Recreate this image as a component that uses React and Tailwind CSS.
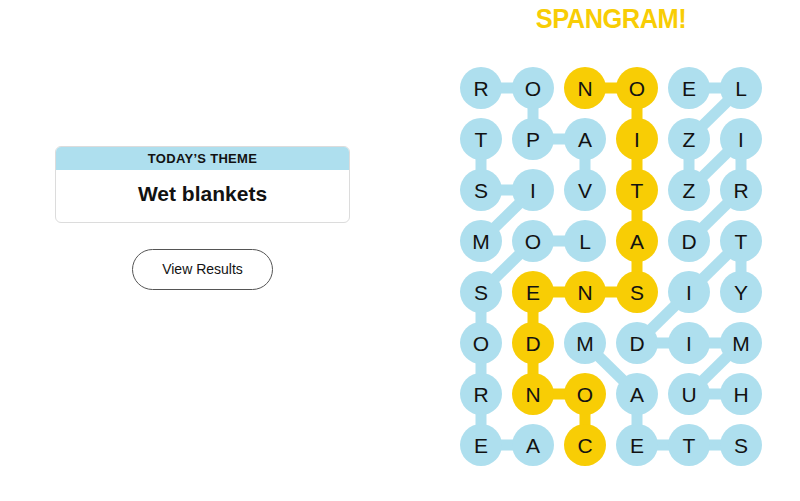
import React from "react";

const GRID = [
  "RONOEL",
  "TPAIZI",
  "SIVTZR",
  "MOLADT",
  "SENSIY",
  "ODMDIM",
  "RNOAUH",
  "EACETS",
];

const WORDS = [
  { spangram: false, cells: [[0, 0], [0, 1], [1, 1], [1, 2], [2, 2]] },
  { spangram: false, cells: [[1, 0], [2, 0], [2, 1], [3, 0]] },
  { spangram: false, cells: [[3, 2], [3, 1], [4, 0], [5, 0], [6, 0], [7, 0], [7, 1]] },
  { spangram: false, cells: [[3, 4], [2, 5], [1, 5], [2, 4], [1, 4], [0, 5], [0, 4]] },
  { spangram: false, cells: [[6, 5], [6, 4], [5, 5], [5, 4], [5, 3], [4, 4], [3, 5], [4, 5]] },
  { spangram: false, cells: [[7, 5], [7, 4], [7, 3], [6, 3], [5, 2]] },
  {
    spangram: true,
    cells: [[7, 2], [6, 2], [6, 1], [5, 1], [4, 1], [4, 2], [4, 3], [3, 3], [2, 3], [1, 3], [0, 3], [0, 2]],
  },
];

const isSpan = (r, c) =>
  WORDS[6].cells.some(([rr, cc]) => rr === r && cc === c);

const cx = (c) => 21 + 52 * c;
const cy = (r) => 21 + 51 * r;

export default function App() {
  return (
    <div className="w-[800px] h-[501px] bg-white flex" style={{ fontFamily: '"Liberation Sans", Arial, sans-serif' }}>
      <div className="w-[405px] flex flex-col items-center pt-[146px]">
        <div className="w-[295px] rounded-md border border-[#dcdcdc] overflow-hidden">
          <div className="h-[23px] bg-[#aedfee] flex items-center justify-center text-[13px] font-bold text-[#121212] leading-none tracking-[0.3px]">
            TODAY’S THEME
          </div>
          <div className="h-[52px] flex items-center justify-center text-[21px] font-bold text-[#121212] leading-none pb-[5px]">
            Wet blankets
          </div>
        </div>
        <button className="mt-[26px] w-[141px] h-[41px] rounded-full border border-[#555] text-[14px] text-[#121212] flex items-center justify-center bg-white">
          View Results
        </button>
      </div>
      <div className="pl-[55px] flex flex-col">
        <div className="h-[67px] w-[302px] flex justify-center pt-[6px]">
          <div className="text-[27px] leading-none font-bold text-[#f8cd05] tracking-[-0.5px] scale-x-[0.94]">SPANGRAM!</div>
        </div>
        <div className="relative w-[302px] h-[399px]">
          <svg className="absolute inset-0" width="302" height="399" viewBox="0 0 302 399">
            {WORDS.map((w, wi) =>
              w.cells.slice(1).map(([r, c], i) => {
                const [pr, pc] = w.cells[i];
                return (
                  <line
                    key={wi + "-" + i}
                    x1={cx(pc)}
                    y1={cy(pr)}
                    x2={cx(c)}
                    y2={cy(r)}
                    stroke={w.spangram ? "#f8cd05" : "#aedfee"}
                    strokeWidth="11"
                  />
                );
              })
            )}
          </svg>
          <div className="relative grid grid-cols-[repeat(6,42px)] gap-x-[10px] gap-y-[9px]">
            {GRID.map((row, r) =>
              row.split("").map((ch, c) => (
                <div
                  key={r + "-" + c}
                  className={
                    "w-[42px] h-[42px] rounded-full flex items-center justify-center text-[21px] leading-none text-[#121212] " +
                    (isSpan(r, c) ? "bg-[#f8cd05]" : "bg-[#aedfee]")
                  }
                >
                  {ch}
                </div>
              ))
            )}
          </div>
        </div>
      </div>
    </div>
  );
}
